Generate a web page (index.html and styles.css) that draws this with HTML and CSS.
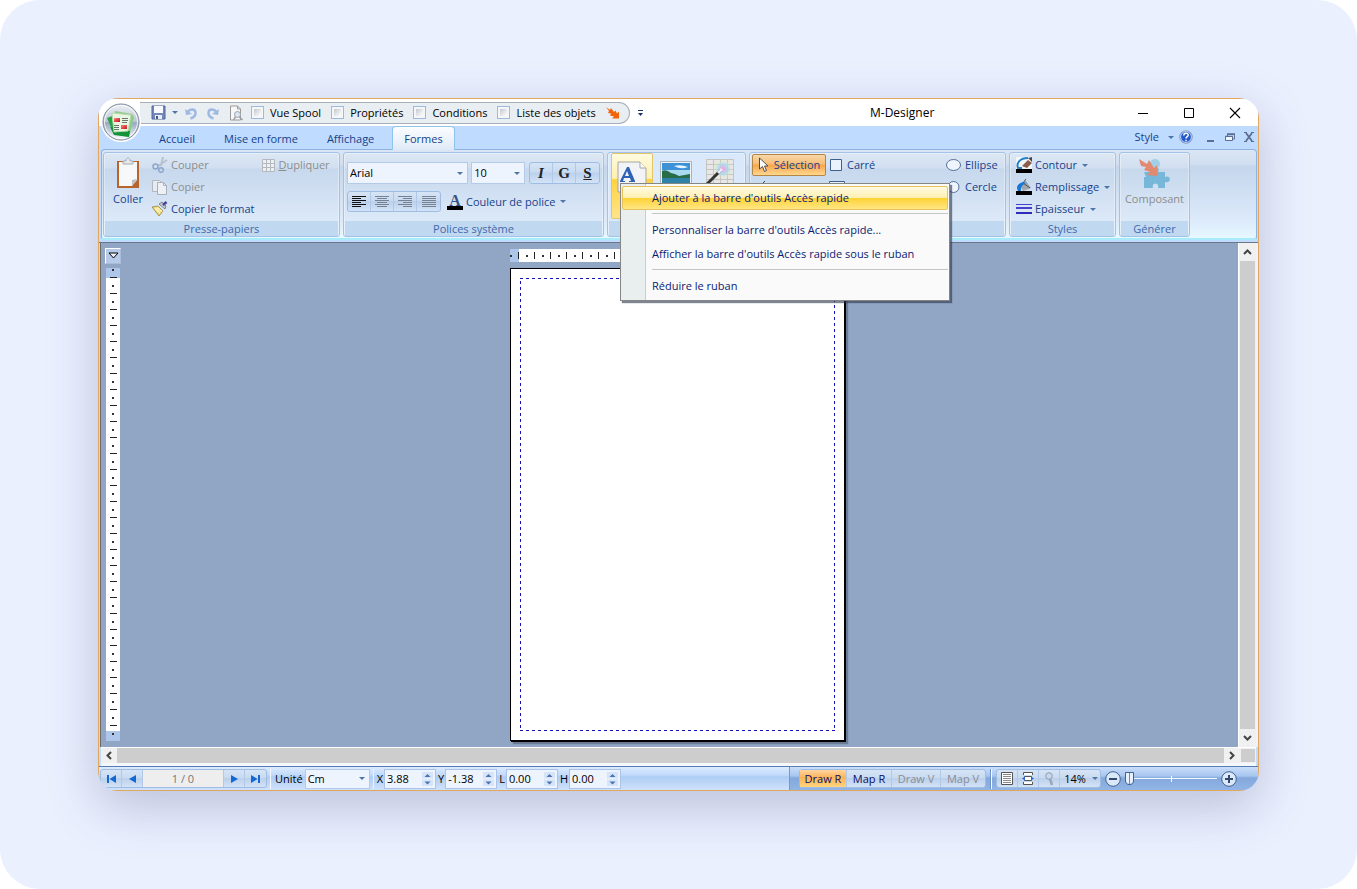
FILE: index.html
```html
<!DOCTYPE html>
<html lang="fr">
<head>
<meta charset="utf-8">
<title>M-Designer</title>
<link rel="stylesheet" href="styles.css">
</head>
<body>
<div class="stage">
<div class="frame">
<div class="window">

<header class="titlebar">
  <button class="orb" aria-label="Menu principal">
    <svg width="38" height="38" viewBox="0 0 38 38">
      <defs>
        <linearGradient id="orbg" x1="0" y1="0" x2="0" y2="1"><stop offset="0" stop-color="#eef1f5"/><stop offset=".48" stop-color="#bcc6d4"/><stop offset=".52" stop-color="#98a8bf"/><stop offset="1" stop-color="#fbfdff"/></linearGradient>
        <linearGradient id="redg" x1="0" y1="0" x2="1" y2="1"><stop offset="0" stop-color="#f68a80"/><stop offset="1" stop-color="#c80d12"/></linearGradient>
      </defs>
      <circle cx="19" cy="19" r="18" fill="url(#orbg)" stroke="#7c879a"/>
      <circle cx="19" cy="19" r="16.5" fill="none" stroke="#fff" opacity=".8"/>
      <path d="M5 15l8-3 4 17-1 3-4-1z" fill="#27a345"/>
      <path d="M13 8l17 3 2 3-5 20-16-3z" fill="#8ecb8b"/>
      <path d="M8 24l4 8 15 2 1-6z" fill="#129338"/>
      <path d="M10 10l19 2-3 16-14 1z" fill="#e9f6e4" stroke="#b5dbac"/>
      <path d="M12 15h6v4h-6z" fill="url(#redg)"/><path d="M19 22h6v4h-6z" fill="url(#redg)"/>
      <path d="M20 15.500h6M20 17.500h6M20 19.500h5M12 22.500h5M12 24.500h5M12 26.500h5" stroke="#6d766c"/>
    </svg>
  </button>
  <div class="quick">
    <button aria-label="Enregistrer"><svg width="15" height="15" viewBox="0 0 15 15"><path d="M1 1h13v13H1z" fill="#7488b8" stroke="#50669e"/><path d="M3 1h9v7H3z" fill="#f7f9fd"/><path d="M4 10h7v4H4z" fill="#e7ecf6"/><path d="M5 11h2v3H5z" fill="#43578a"/></svg></button>
    <button class="quick-more" aria-label="Options d'enregistrement"><i class="caret"></i></button>
    <button aria-label="Annuler"><svg width="14" height="14" viewBox="0 0 14 14"><path d="M3.500 6C6 2.500 11 2.500 11.500 6.500c.3 3-2 5-5 6" fill="none" stroke="#9db8e3" stroke-width="2.400"/><path d="M1 3l1 6 6-1z" fill="#9db8e3"/></svg></button>
    <button class="redo" aria-label="Rétablir"><svg width="14" height="14" viewBox="0 0 14 14"><path d="M10.500 6C8 2.500 3 2.500 2.500 6.500c-.3 3 2 5 5 6" fill="none" stroke="#9db8e3" stroke-width="2.400"/><path d="M13 3l-1 6-6-1z" fill="#9db8e3"/></svg></button>
    <button class="preview" aria-label="Aperçu"><svg width="14" height="16" viewBox="0 0 14 16"><path d="M1.500 1h7l3 3v11h-10z" fill="#f8f8f8" stroke="#9a9a9a"/><path d="M8.500 1v3h3" fill="none" stroke="#9a9a9a"/><circle cx="8.500" cy="9.500" r="3" fill="#dce6ef" stroke="#9aa2aa"/><path d="M10.500 12l3 3M6.500 12l-2 3" stroke="#9aa2aa" stroke-width="1.500"/></svg></button>
    <label class="tick"><input type="checkbox">Vue Spool</label>
    <label class="tick"><input type="checkbox">Propriétés</label>
    <label class="tick"><input type="checkbox">Conditions</label>
    <label class="tick"><input type="checkbox">Liste des objets</label>
    <button class="bolt" aria-label="Générer un composant"><svg width="14" height="12" viewBox="0 0 14 12"><path d="M0 0l4 3 1-2 3 4 1.500-1.500 1.500 3 2-2v7H6l2-2-4-1 1-2-3-.5L3 4z" fill="#f2640a"/></svg></button>
  </div>
  <button class="quick-custom" aria-label="Personnaliser"><svg width="7" height="8" viewBox="0 0 7 8"><path d="M1 1.500h5" stroke="#1d2f6b"/><path d="M1 4h5L3.500 7z" fill="#1d2f6b"/></svg></button>
  <div class="title">M-Designer</div>
  <div class="controls">
    <button aria-label="Réduire"><svg width="12" height="12" viewBox="0 0 12 12"><path d="M1 6.500h10" stroke="#000"/></svg></button>
    <button aria-label="Agrandir"><svg width="12" height="12" viewBox="0 0 12 12"><path d="M1.500 1.500h9v9h-9z" fill="none" stroke="#000"/></svg></button>
    <button aria-label="Fermer"><svg width="12" height="12" viewBox="0 0 12 12"><path d="M1 1l10 10M11 1L1 11" stroke="#000" stroke-width="1.100"/></svg></button>
  </div>
</header>

<nav class="tabs">
  <button>Accueil</button><button>Mise en forme</button><button>Affichage</button><button class="active">Formes</button>
  <div class="tabs-right">
    <button class="style-menu">Style<i class="caret"></i></button>
    <button aria-label="Aide"><svg width="14" height="14" viewBox="0 0 14 14"><circle cx="7" cy="7" r="6.300" fill="#245cd0" stroke="#9aa7bd"/><circle cx="7" cy="7" r="5.400" fill="none" stroke="#e9f1ff" stroke-width=".8"/><path d="M4.800 5.500c0-3 4.600-2.800 4.400-.3C9.100 6.700 7 6.600 7 8.500M7 9.700v1.600" fill="none" stroke="#fff" stroke-width="1.500"/></svg></button>
    <button aria-label="Réduire le document"><svg width="10" height="10" viewBox="0 0 10 10"><path d="M1 9h7" stroke="#5c6f8f" stroke-width="2"/></svg></button>
    <button aria-label="Restaurer le document"><svg width="10" height="10" viewBox="0 0 10 10"><path d="M2.500 4V2.500h7V7H8" fill="none" stroke="#5c6f8f"/><path d="M2 2h8M0 4.500h8" stroke="#5c6f8f" stroke-width="1.500"/><path d="M.5 4.500h7v4h-7z" fill="#eef5ff" stroke="#5c6f8f"/></svg></button>
    <button aria-label="Fermer le document"><svg width="10" height="10" viewBox="0 0 10 10"><path d="M2 1l6 8M8 1L2 9" stroke="#5c6f8f" stroke-width="1.800"/><path d="M0 .5h3M7 .5h3M0 9.500h3M7 9.500h3" stroke="#5c6f8f"/></svg></button>
  </div>
</nav>

<section class="ribbon-wrap">
<div class="ribbon">
  <section class="group clipboard">
    <div class="body">
      <button class="big"><svg width="24" height="32" viewBox="0 0 24 32"><path d="M1 4h22v27H1z" fill="#b8642d"/><path d="M3 5h18v18l-5 6H3z" fill="#f7f8f9"/><path d="M21 22l-5 7v-6z" fill="#b9bec4"/><path d="M7 4h3c0-4 4-4 4 0h3v3H7z" fill="#e8eaec" stroke="#a5abb1"/></svg>Coller</button>
      <div class="rows">
        <button class="cmd off"><svg width="16" height="16" viewBox="0 0 16 16"><path d="M11 0L9 9M15 3L6 9" stroke="#b9c2cc" stroke-width="2"/><circle cx="3.500" cy="9.500" r="2.500" fill="none" stroke="#8ea6cc" stroke-width="1.500"/><circle cx="9" cy="13" r="2.300" fill="none" stroke="#8ea6cc" stroke-width="1.500"/></svg>Couper</button>
        <button class="cmd off"><svg width="16" height="16" viewBox="0 0 16 16"><path d="M.5 1.500h7l2 2v9h-9z" fill="#e6ebf2" stroke="#b0b7c0"/><path d="M5.500 3.500h6l3 3v9h-9z" fill="#edf1f6" stroke="#a9b0b9"/><path d="M11.500 3.500v3h3" fill="none" stroke="#a9b0b9"/></svg>Copier</button>
        <button class="cmd"><svg width="16" height="16" viewBox="0 0 16 16"><path d="M0 6l6-1 5 5-4 5z" fill="#ecd477" stroke="#8b7a38" stroke-width=".7"/><path d="M3 7l5 5M5 6.500l5 4" stroke="#fff4bd" stroke-width="1.500"/><path d="M7 3l6 5 1-3-4-4z" fill="#c4c9d2" stroke="#666" stroke-width=".7"/><path d="M11 4l3.500-3" stroke="#45459a" stroke-width="2.600"/></svg>Copier le format</button>
      </div>
      <div class="rows">
        <button class="cmd off"><svg width="14" height="14" viewBox="0 0 14 14"><path d="M1.500 1.500h12v12h-12zM5.500 1v13M9.500 1v13M1 5.500h13M1 9.500h13" fill="#edf0f3" stroke="#b5b9bf"/></svg><span><u>D</u>upliquer</span></button>
      </div>
    </div>
    <h2>Presse-papiers</h2>
  </section>

  <section class="group fonts">
    <div class="body">
      <div class="line">
        <label class="drop family"><select aria-label="Police"><option>Arial</option></select><i class="caret"></i></label>
        <label class="drop size"><select aria-label="Taille"><option>10</option></select><i class="caret"></i></label>
        <div class="segment serif"><button><i>I</i></button><button>G</button><button><u>S</u></button></div>
      </div>
      <div class="line">
        <div class="segment align">
          <button class="on" aria-label="Gauche"><svg width="14" height="12" viewBox="0 0 14 12"><path d="M0 .5h14M0 2.500h9M0 4.500h14M0 6.500h9M0 8.500h14M0 10.500h9" stroke="currentColor"/></svg></button>
          <button aria-label="Centre"><svg width="14" height="12" viewBox="0 0 14 12"><path d="M0 .5h14M2 2.500h10M0 4.500h14M2 6.500h10M0 8.500h14M2 10.500h10" stroke="currentColor"/></svg></button>
          <button aria-label="Droite"><svg width="14" height="12" viewBox="0 0 14 12"><path d="M0 .5h14M5 2.500h9M0 4.500h14M5 6.500h9M0 8.500h14M5 10.500h9" stroke="currentColor"/></svg></button>
          <button aria-label="Justifié"><svg width="14" height="12" viewBox="0 0 14 12"><path d="M0 .5h14M0 2.500h14M0 4.500h14M0 6.500h14M0 8.500h14M0 10.500h14" stroke="currentColor"/></svg></button>
        </div>
        <button class="cmd color"><span class="letter">A</span>Couleur de police<i class="caret"></i></button>
      </div>
    </div>
    <h2>Polices système</h2>
  </section>

  <section class="group objects" aria-label="Objets">
    <div class="body">
      <button class="tile chosen" aria-label="Texte"><svg width="30" height="32" viewBox="0 0 30 32"><path d="M1 1h22l6 6v24H1z" fill="#f1f3f6" stroke="#a7a7a0"/><path d="M23 1v6h6" fill="#fff" stroke="#a7a7a0"/><path d="M3 20L10 6h2l6 14v1h-6v-1h2l-1-3H7l-1 3h2v1H3zM8 15h4l-2-5z" fill="#2d62b6"/></svg><i class="caret"></i></button>
      <button class="tile" aria-label="Image"><svg width="32" height="25" viewBox="0 0 32 25"><path d="M.5.500h31v24H.5z" fill="#eef2f5" stroke="#a8b3bd"/><path d="M2 2h28v21H2z" fill="#3c91d7"/><path d="M2 9h28v7H2z" fill="#a9daf0"/><path d="M14 5q7-2 14 1-7 3-14-1z" fill="#e7f6ff"/><path d="M2 10q4-2 9 2 5 1 8 3l11-2v4H2z" fill="#286c48"/><path d="M2 17h28v6H2z" fill="#2e82a8"/></svg></button>
      <button class="tile" aria-label="Tableau"><svg width="30" height="28" viewBox="0 0 30 28"><defs><radialGradient id="rain"><stop offset="0" stop-color="#ff9ad5"/><stop offset=".5" stop-color="#a5dbf5" stop-opacity=".8"/><stop offset="1" stop-color="#f8f5a0" stop-opacity="0"/></radialGradient></defs><path d="M1.500.500h27v27h-27zM1 5.500h28M1 10.500h28M1 15.500h28M1 20.500h28M8.500 0v28M15.500 0v28M22.500 0v28" fill="#e9e7e6" stroke="#c6c4c2"/><circle cx="18" cy="10" r="10" fill="url(#rain)"/><path d="M1 26L16 11" stroke="#333" stroke-width="3"/><path d="M13 14l4-4" stroke="#e8e8ff" stroke-width="3"/></svg></button>
    </div>
    <h2></h2>
    <div class="menu" role="menu">
      <button class="hot" role="menuitem">Ajouter à la barre d'outils Accès rapide</button>
      <hr>
      <button role="menuitem">Personnaliser la barre d'outils Accès rapide...</button>
      <button role="menuitem">Afficher la barre d'outils Accès rapide sous le ruban</button>
      <hr>
      <button role="menuitem">Réduire le ruban</button>
    </div>
  </section>

  <section class="group shapes" aria-label="Formes">
    <div class="body">
      <div class="rows">
        <button class="cmd select"><svg width="12" height="16" viewBox="0 0 12 16"><path d="M1.500 1v11l3-2.500 2 5 2-1-2-4.500H10z" fill="#fff" stroke="#4d4d55"/></svg>Sélection</button>
        <button class="cmd" aria-label="Ligne"><svg width="16" height="14" viewBox="0 0 16 14"><path d="M2 12L13 1" stroke="#27477e"/></svg></button>
      </div>
      <div class="rows">
        <button class="cmd"><svg width="14" height="14" viewBox="0 0 14 14"><path d="M1.500 1.500h11v11h-11z" fill="#eaf2fd" stroke="#41608f"/></svg>Carré</button>
        <button class="cmd" aria-label="Rectangle"><svg width="16" height="14" viewBox="0 0 16 14"><path d="M.5 1.500h15v10H.5z" fill="#eaf2fd" stroke="#41608f"/></svg></button>
      </div>
      <div class="rows">
        <button class="cmd"><svg width="15" height="14" viewBox="0 0 15 14"><ellipse cx="7.500" cy="7" rx="7" ry="5.500" fill="#eef5ff" stroke="#566f98"/></svg>Ellipse</button>
        <button class="cmd"><svg width="15" height="14" viewBox="0 0 15 14"><circle cx="7.500" cy="7" r="5.500" fill="#eef5ff" stroke="#566f98"/></svg>Cercle</button>
      </div>
    </div>
    <h2></h2>
  </section>

  <section class="group styles">
    <div class="body">
      <div class="rows">
        <button class="cmd"><svg width="16" height="16" viewBox="0 0 16 16"><path d="M0 0h16v13H0z" fill="#f3f6f8"/><path d="M12 1C4 1 0 6 2 11h4" fill="none" stroke="#2680c4" stroke-width="2"/><path d="M12 3l4 3-5 5-5-2z" fill="#8d5d4b"/><path d="M12 1l4-1v5z" fill="#454954"/><path d="M0 12h16v4H0z"/></svg>Contour<i class="caret"></i></button>
        <button class="cmd"><svg width="16" height="16" viewBox="0 0 16 16"><path d="M4 5l6-3 5 7-8 3z" fill="#a1a7ad"/><path d="M10 0L7 4l7 5" fill="none" stroke="#4b4d55"/><path d="M7 3C1 5 0 8 2 12h3c0-4 1-6 5-8z" fill="#1779d3"/><path d="M0 12h16v4H0z"/></svg>Remplissage<i class="caret"></i></button>
        <button class="cmd"><svg width="16" height="12" viewBox="0 0 16 12"><path d="M0 1.500h16" stroke="#4341ce"/><path d="M0 5h16" stroke="#4341ce" stroke-width="2"/><path d="M0 10h16" stroke="#2e2bbd" stroke-width="2"/></svg>Epaisseur<i class="caret"></i></button>
      </div>
    </div>
    <h2>Styles</h2>
  </section>

  <section class="group generate">
    <div class="body">
      <button class="big off"><svg width="32" height="32" viewBox="0 0 32 32"><path d="M5 15h8c-4-7 10-7 6 0h7v5c6-3 7 7 0 5v6h-7c2-6-7-6-5 0H5V20h2z" fill="#77b7da"/><circle cx="16" cy="7" r="5" fill="#9fd0e8"/><path d="M0 2l8 5 2-4 5 8 3-3 1 11-11-1 3-3-6-2 2-3-5-1z" fill="#e18a70"/></svg>Composant</button>
    </div>
    <h2>Générer</h2>
  </section>
</div>
</section>

<main class="workspace">
  <aside class="ruler-side">
    <button class="ruler-toggle" aria-label="Unités de la règle"><svg width="11" height="8" viewBox="0 0 11 8"><path d="M1 1h9L5.500 6z" fill="#eef3fb" stroke="#000"/></svg></button>
    <div class="ruler-v"></div>
  </aside>
  <div class="canvas">
    <div class="ruler-h"></div>
    <div class="sheet"><div class="margins"><svg width="100%" height="100%"><rect width="100%" height="100%"/></svg></div></div>
  </div>
  <div class="scroll-v">
    <button aria-label="Haut"><svg width="9" height="6" viewBox="0 0 9 6"><path d="M1 5l3.500-3.500L8 5" fill="none" stroke="#444" stroke-width="2"/></svg></button>
    <div class="thumb"></div>
    <button aria-label="Bas"><svg width="9" height="6" viewBox="0 0 9 6"><path d="M1 1l3.500 3.500L8 1" fill="none" stroke="#444" stroke-width="2"/></svg></button>
  </div>
</main>
<div class="scroll-h">
  <button aria-label="Gauche"><svg width="6" height="9" viewBox="0 0 6 9"><path d="M5 1L1.500 4.500 5 8" fill="none" stroke="#444" stroke-width="2"/></svg></button>
  <div class="thumb"></div>
  <button aria-label="Droite"><svg width="6" height="9" viewBox="0 0 6 9"><path d="M1 1l3.500 3.500L1 8" fill="none" stroke="#444" stroke-width="2"/></svg></button>
  <div class="grip"></div>
</div>

<footer class="status">
  <div class="segment nav">
    <button aria-label="Première page"><svg width="11" height="10" viewBox="0 0 11 10"><path d="M1 1h2v8H1zM10 1v8L3.500 5z" fill="#1468d4"/></svg></button>
    <button aria-label="Page précédente"><svg width="11" height="10" viewBox="0 0 11 10"><path d="M9 1v8L2 5z" fill="#1468d4"/></svg></button>
    <input class="pager" aria-label="Page" value="1 / 0">
    <button aria-label="Page suivante"><svg width="11" height="10" viewBox="0 0 11 10"><path d="M2 1v8l7-4z" fill="#1468d4"/></svg></button>
    <button aria-label="Dernière page"><svg width="11" height="10" viewBox="0 0 11 10"><path d="M8 1h2v8H8zM1 1v8l6.500-4z" fill="#1468d4"/></svg></button>
  </div>
  <div class="unit"><label for="unit">Unité</label><span class="drop"><select id="unit"><option>Cm</option></select><i class="caret"></i></span></div>
  <div class="coords">
    <label>X<span class="spin"><input value="3.88"><svg width="11" height="14" viewBox="0 0 11 14"><path d="M0 0h11v6.500H0zM0 7.500h11V14H0z" fill="#d5e4f8"/><path d="M2.500 5h6l-3-3zM2.500 9.500h6l-3 3z" fill="#4d74b0"/></svg></span></label>
    <label>Y<span class="spin"><input value="-1.38"><svg width="11" height="14" viewBox="0 0 11 14"><path d="M0 0h11v6.500H0zM0 7.500h11V14H0z" fill="#d5e4f8"/><path d="M2.500 5h6l-3-3zM2.500 9.500h6l-3 3z" fill="#4d74b0"/></svg></span></label>
    <label>L<span class="spin"><input value="0.00"><svg width="11" height="14" viewBox="0 0 11 14"><path d="M0 0h11v6.500H0zM0 7.500h11V14H0z" fill="#d5e4f8"/><path d="M2.500 5h6l-3-3zM2.500 9.500h6l-3 3z" fill="#4d74b0"/></svg></span></label>
    <label>H<span class="spin"><input value="0.00"><svg width="11" height="14" viewBox="0 0 11 14"><path d="M0 0h11v6.500H0zM0 7.500h11V14H0z" fill="#d5e4f8"/><path d="M2.500 5h6l-3-3zM2.500 9.500h6l-3 3z" fill="#4d74b0"/></svg></span></label>
  </div>
  <div class="view">
    <div class="segment modes"><button class="active">Draw R</button><button>Map R</button><button class="off">Draw V</button><button class="off">Map V</button></div>
    <i class="divider"></i>
    <div class="segment zoom">
      <button aria-label="Page entière"><svg width="12" height="13" viewBox="0 0 12 13"><path d="M.5.500h11v12H.5z" fill="#fff" stroke="#555"/><path d="M2 2.500h8M2 4.500h8M2 6.500h8M2 8.500h8M2 10.500h8" stroke="#888"/></svg></button>
      <button aria-label="Largeur de page"><svg width="12" height="13" viewBox="0 0 12 13"><path d="M1.500 3V.5h9V3M1.500 10v2.500h9V10" fill="#fff" stroke="#555"/><path d="M2.500 4.500h7v4h-7z" fill="#fff" stroke="#555"/><path d="M0 6.500l3-2v4zM12 6.500l-3-2v4z" fill="#2c64d8"/></svg></button>
      <button aria-label="Loupe"><svg width="10" height="14" viewBox="0 0 10 14"><circle cx="5" cy="4" r="3.300" fill="#c8d7ea" stroke="#8d9db3"/><path d="M6 7l2 6" stroke="#9aa5b5" stroke-width="2.500"/></svg></button>
      <button class="percent">14%</button>
      <button class="percent-more" aria-label="Choisir le zoom"><i class="caret"></i></button>
    </div>
    <button class="round" aria-label="Zoom arrière"><svg width="16" height="16" viewBox="0 0 16 16"><circle cx="8" cy="8" r="7.300" fill="#dbe8f9" stroke="#41638f"/><path d="M4 8h8" stroke="#324a6e" stroke-width="2"/></svg></button>
    <div class="slider"><i></i><input type="range" aria-label="Zoom" min="0" max="100" value="0"></div>
    <button class="round" aria-label="Zoom avant"><svg width="16" height="16" viewBox="0 0 16 16"><circle cx="8" cy="8" r="7.300" fill="#dbe8f9" stroke="#41638f"/><path d="M4 8h8M8 4v8" stroke="#324a6e" stroke-width="2"/></svg></button>
  </div>
</footer>

</div>
</div>
</div>
</body>
</html>
```
FILE: styles.css
```css
* { box-sizing: border-box; }
body { margin: 0; background: #fff; font: 11px/16px "Open Sans", "Noto Sans", sans-serif; color: #15428b; }
button, input, select { font: inherit; color: inherit; margin: 0; padding: 0; border: 0; background: none; }
button { display: flex; align-items: center; justify-content: center; white-space: nowrap; }
svg { display: block; flex: none; }
select { appearance: none; outline: 0; width: 100%; }
h2 { margin: 0; font: inherit; }

.stage { min-height: 100vh; padding: 98px; display: grid; background: #ebf0ff; border-radius: 40px; }
.frame { display: grid; border-radius: 20px; overflow: hidden; box-shadow: 0 16px 50px rgba(62, 72, 118, .28); }
.window { display: grid; min-width: 0; grid-template-rows: 27px 23px 94px 1fr 19px 24px; border: 1px solid #e2a75f; background: #bfdbff; }

.caret { flex: none; width: 0; height: 0; border: 3px solid transparent; border-top-color: #4f75a8; border-bottom: 0; }

/* title bar */
.titlebar { position: relative; display: flex; align-items: center; background: #fff; padding-left: 41px; color: #000; }
.orb { position: absolute; z-index: 3; left: 2px; top: 3px; width: 40px; height: 40px; border-radius: 50%; background: #fff; }
.quick { display: flex; align-items: center; width: 490px; height: 22px; padding-left: 11px; border: 1px solid #a9afb8; border-left: 0; border-radius: 0 11px 11px 0; background: #e9eef2; }
.quick-more { width: 18px; height: 16px; }
.redo { margin-left: 8px; }
.preview { margin: 0 8px 0 9px; }
.tick { display: flex; align-items: center; gap: 6px; margin-right: 10px; white-space: nowrap; }
.tick input { appearance: none; width: 13px; height: 13px; border: 1px solid #9db9de; background: linear-gradient(135deg, #c3c8d0, #fff) center / 7px 7px no-repeat #f4f6f8; box-shadow: inset 0 0 0 1px #f4f6f8; }
.quick-custom { margin-left: 7px; }
.title { flex: 1; padding-left: 226px; font-size: 12px; }
.controls { display: flex; gap: 34px; padding-right: 17px; }

/* tabs */
.tabs { display: flex; align-items: stretch; padding-left: 45px; }
.tabs > button { padding: 2px 14px 0 15px; height: 24px; }
.tabs > .active { position: relative; z-index: 1; margin-left: 4px; padding: 1px 11px 0; border: 1px solid #8ec3ea; border-bottom: 0; border-radius: 4px 4px 0 0; background: linear-gradient(#fbfdff, #dfeaf7); }
.tabs-right { margin-left: auto; display: flex; align-items: center; gap: 9px; padding: 0 4px 1px 0; }
.style-menu { gap: 9px; }
.tabs-right button:nth-child(2) { margin: 0 4px 0 -4px; }

/* ribbon */
.ribbon-wrap { padding: 0 1px 2px 2px; border-bottom: 1px solid #6b7687; position: relative; }
.ribbon { display: flex; gap: 3px; height: 91px; padding: 2px 0 1px 1px; border: 1px solid #8db2e3; border-bottom: 2px solid #a9eafb; border-radius: 4px; background: linear-gradient(#dbe6f4 0, #cfdef0 15px, #c5d6ec 16px, #dceafa 70px, #e6f8ff); }
.group { display: flex; flex-direction: column; flex: none; border: 1px solid #a2c2e8; border-radius: 3px; box-shadow: inset 0 0 0 1px rgba(255, 255, 255, .35); background: linear-gradient(#dde7f4 0, #d1dff0 15px, #c7d8ed 16px, #dce9f8 68px); }
.group > h2 { height: 15px; margin: 0 1px; line-height: 15px; text-align: center; background: #c1d8f1; color: #3e6aaa; }
.group > .body { display: flex; flex: 1; min-height: 0; }
.clipboard { width: 237px; }
.fonts { width: 261px; }
.objects { width: 139px; position: relative; z-index: 5; }
.shapes { width: 257px; }
.styles { width: 107px; }
.generate { width: 71px; }
.big { flex-direction: column; justify-content: flex-start; gap: 2px; width: 48px; padding-top: 4px; }
.generate .big { width: 100%; }
.rows { display: grid; grid-template-rows: repeat(3, 22px); align-content: start; justify-items: start; padding-top: 1px; }
.cmd { gap: 3px; }
.off { color: #8d8d8d; }
.clipboard .rows + .rows { margin-left: 7px; }

.fonts > .body { flex-direction: column; gap: 7px; padding: 9px 3px 0; }
.line { display: flex; align-items: center; gap: 3px; }
.drop { display: grid; grid-template-columns: 1fr 6px; align-items: center; height: 22px; padding: 0 4px 0 2px; border: 1px solid #b3cbe9; background: #edf4fd; color: #000; }
.family { width: 122px; }
.size { width: 54px; }
.segment { display: flex; border: 1px solid #9fbce2; border-radius: 3px; background: linear-gradient(#d6e4f5 0, #c9dbf1 45%, #bbd0eb 50%, #d3e3f7); }
.segment button { height: 20px; border-right: 1px solid #b1c9e8; }
.segment button:last-child { border-right: 0; }
.serif { margin-left: 1px; color: #222; font: bold 15px/18px "Liberation Serif", serif; }
.serif button { width: 23px; }
.align { color: #78818f; }
.align button { width: 23px; height: 19px; }
.align .on { color: #111; }
.color { margin-left: 3px; }
.color .caret, .styles .caret { margin-left: 2px; }
.letter { width: 16px; height: 16px; border-bottom: 4px solid #000; font: bold 16px/13px "Liberation Serif", serif; color: #375387; }

.objects { background: #d9e9fb; }
.objects > .body { gap: 2px; padding: 0 3px; align-items: flex-start; }
.tile { width: 42px; height: 66px; flex-direction: column; justify-content: flex-start; padding-top: 8px; gap: 5px; }
.chosen { padding-top: 7px; }
.tile:nth-child(3) { padding-top: 6px; }
.chosen { border: 1px solid #e3c56c; border-radius: 2px; background: linear-gradient(#fffbe0, #fff0ae 38%, #ffd33f 40%, #ffe48a); }

.menu { position: absolute; left: 12px; top: 30px; padding: 2px 1px; border: 1px solid #868686; background: linear-gradient(to right, #e9eeee 0 24px, #c9cfcf 24px 25px, #fafafa 25px); box-shadow: 2px 2px 1px rgba(40, 50, 70, .6); color: #0b1b73; width: 330px; }
.menu button { width: 100%; height: 24px; padding-left: 29px; justify-content: flex-start; border: 1px solid transparent; }
.menu .hot { border-color: #e6c25e; border-radius: 2px; background: linear-gradient(#fffbe3 0, #fff0b1 48%, #ffd336 52%, #ffe684); }
.menu hr { height: 1px; margin: 3px 0 4px 30px; border: 0; background: #c5c5c5; }

.shapes > .body { padding-left: 2px; }
.shapes .rows:nth-child(1) { width: 77px; }
.shapes .rows:nth-child(2) { width: 117px; }
.shapes .cmd { gap: 4px; }
.shapes .select { width: 74px; height: 22px; border: 1px solid #b58543; border-radius: 2px; background: linear-gradient(#f7d7ab, #f6bd75 45%, #f5a54d 50%, #ffd78c); }
.styles > .body { padding-left: 6px; }

/* workspace */
.workspace { display: flex; min-height: 460px; margin-left: 1px; border-left: 1px solid #6a6a6a; border-right: 2px solid #eef3fb; background: #91a5c5; }
.ruler-side { display: flex; flex-direction: column; align-items: center; gap: 4px; width: 24px; padding: 5px 0 6px; }
.ruler-toggle { width: 16px; height: 16px; border: 1px solid #fff; border-right-color: #a9bddb; border-bottom-color: #a9bddb; background: #b7cbe8; }
.ruler-v { width: 14px; flex: 1; background: linear-gradient(#222 0 1px, transparent 1px) center 9px / 7px 16px repeat-y, linear-gradient(#333 0 2px, transparent 2px) center 1px / 2px 16px repeat-y, linear-gradient(#aec6ea, #aec6ea) top / 14px 10px no-repeat, linear-gradient(#aec6ea, #aec6ea) bottom / 14px 10px no-repeat, #fff; }
.canvas { flex: 1; display: flex; flex-direction: column; align-items: center; gap: 6px; padding: 6px 9px 6px 0; }
.ruler-h { width: 335px; height: 13px; background: linear-gradient(to right, #222 0 1px, transparent 1px) 8px center / 16px 7px repeat-x, linear-gradient(to right, #333 0 2px, transparent 2px) 0 center / 16px 2px repeat-x, linear-gradient(#aec6ea, #aec6ea) left / 9px 13px no-repeat, linear-gradient(#aec6ea, #aec6ea) right / 9px 13px no-repeat, #fff; }
.sheet { width: 335px; flex: 1; padding: 9px; border: 1px solid #000; background: #fff; box-shadow: 1px 1px 0 #000, 3px 3px 1px #6c7c97; display: grid; }
.margins { display: grid; overflow: hidden; }
.margins rect { fill: none; stroke: #1212b5; stroke-width: 2px; stroke-dasharray: 3px 3px; }
.scroll-v { width: 18px; display: flex; flex-direction: column; background: #f0f0f0; border-left: 1px solid #fff; padding: 0 1px; }
.scroll-v button { height: 18px; }
.thumb { flex: 1; background: #cdcdcd; }
.scroll-h { display: flex; background: #f0f0f0; margin: 0 2px; align-self: start; }
.scroll-h button { width: 16px; }
.grip { width: 14px; margin: 1px; background: #cdcdcd; }
.window > .scroll-h { height: 19px; border-top: 1px solid #fff; border-bottom: 3px solid #f5f7fb; }

/* status bar */
.status { display: flex; align-items: center; min-width: 0; padding-left: 1px; border-top: 1px solid #567db2; background: linear-gradient(#dcebff 0, #c1dafa 8px, #aecdf5 10px, #cfe2fb); color: #000; }
.status .segment { height: 19px; }
.status .segment button { height: 17px; }
.nav button { width: 21px; }
.pager { width: 81px; text-align: center; background: #eee; color: #777; border-right: 1px solid #b1c9e8; }
.unit { display: flex; align-items: center; gap: 2px; margin-left: 3px; padding-left: 4px; border-left: 1px solid #f5f9ff; }
.status .drop { height: 20px; width: 65px; }
.coords { display: flex; gap: 2px; margin-left: 3px; padding-left: 3px; border-left: 1px solid #eaf3ff; }
.coords label { display: flex; align-items: center; gap: 1px; }
.spin { display: flex; align-items: center; width: 52px; height: 20px; padding: 0 2px; border: 1px solid #a9c4e8; background: #edf4fd; }
.spin input { min-width: 0; flex: 1; }
.view { margin-left: auto; display: flex; align-items: center; height: 100%; width: 469px; padding-left: 9px; border-left: 1px solid #7698cb; background: linear-gradient(#c9defa 0, #a7c6ef 9px, #83a8dc 11px, #92b5e6); }
.modes button { color: #0c0c61; width: 47px; }
.modes button:nth-child(2) { width: 45px; }
.modes button:nth-child(3) { width: 49px; }
.modes button:nth-child(4) { width: 44px; }
.modes .off { color: #8c8c92; }
.modes .active { background: linear-gradient(#ffd6a0, #ffb257 45%, #ffd57c); }
.divider { width: 2px; height: 20px; margin: 0 4px; border-left: 1px solid #6c90c7; background: #fff; }
.zoom button { width: 21px; }
.zoom .percent { width: 30px; border-right: 0; }
.zoom .percent-more { width: 10px; }
.round { margin: 0 4px; }
.slider { display: grid; align-items: center; width: 92px; }
.slider > * { grid-area: 1 / 1; }
.slider i { justify-self: center; width: 1px; height: 6px; background: #fff; }
.slider input { appearance: none; width: 100%; height: 14px; background: linear-gradient(#f3f8ff, #f3f8ff) center / 100% 1px no-repeat; }
.slider input::-webkit-slider-thumb { appearance: none; width: 9px; height: 13px; border: 1px solid #41638f; border-radius: 1px 1px 5px 5px; background: linear-gradient(to right, #e8f1ff 3px, #6d8db8 3px 4px, #e8f1ff 4px); }
```
